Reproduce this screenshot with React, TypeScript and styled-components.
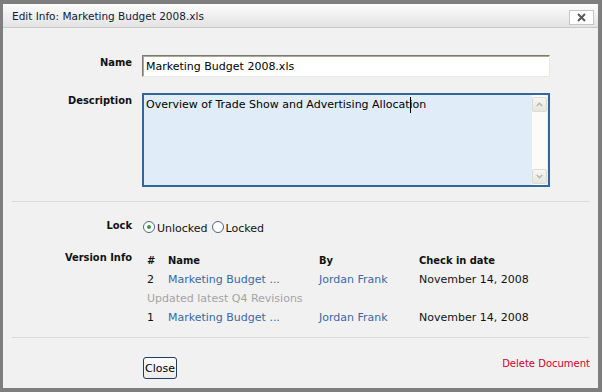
import React from 'react';
import styled, { createGlobalStyle } from 'styled-components';

const Global = createGlobalStyle`
  html, body { margin: 0; padding: 0; background: #ffffff; }
  body {
    font-family: "DejaVu Sans", Verdana, sans-serif;
    font-size: 11px;
    color: #111;
  }
`;

const Dialog = styled.div`
  box-sizing: border-box;
  width: 602px;
  height: 392px;
  border-style: solid;
  border-color: #7e7e7e;
  border-width: 4px 4px 4px 3px;
  background: #f1f1f1;
  display: flex;
  flex-direction: column;
`;

const TitleBar = styled.div`
  height: 23px;
  display: flex;
  align-items: center;
  justify-content: space-between;
  padding: 0 4px 0 9px;
  background: linear-gradient(#fcfcfc, #e3e3e3);
  border-bottom: 1px solid #c9c9c9;
`;

const Title = styled.div`
  font-size: 10.5px;
  color: #14183a;
  padding-top: 1px;
`;

const XButton = styled.button`
  box-sizing: border-box;
  width: 25px;
  height: 15px;
  margin-top: 4px;
  padding: 0;
  border: 1px solid #c6c6c6;
  background: #ffffff;
  display: flex;
  align-items: center;
  justify-content: center;
`;

const Body = styled.div`
  flex: 1;
  padding: 27px 8px 9px 9px;
  display: flex;
  flex-direction: column;
`;

const FormGrid = styled.div<{ $gap: number; $top?: number }>`
  display: grid;
  grid-template-columns: 120px 408px;
  column-gap: 10px;
  row-gap: ${p => p.$gap}px;
  margin-top: ${p => p.$top ?? 0}px;
`;

const Label = styled.div`
  text-align: right;
  font-family: "DejaVu Sans Condensed", "DejaVu Sans", sans-serif;
  font-stretch: condensed;
  font-weight: bold;
  font-size: 11px;
  line-height: 16px;
  color: #111;
`;

const TextInput = styled.div`
  box-sizing: border-box;
  height: 22px;
  border-style: solid;
  border-width: 1px;
  border-color: #7f7b6e #ece9d8 #ece9d8 #7f7b6e;
  box-shadow: inset 1px 1px 0 #aaa796;
  background: #ffffff;
  padding: 0 3px;
  line-height: 21px;
  font-size: 11px;
  color: #000;
`;

const DescBox = styled.div`
  box-sizing: border-box;
  height: 94px;
  border: 2px solid #336699;
  background: #e1ecf9;
  display: flex;
`;

const DescText = styled.div`
  flex: 1;
  padding: 2px 2px;
  line-height: 16px;
  font-size: 11px;
  color: #000;
`;

const Caret = styled.span`
  display: inline-block;
  width: 1px;
  height: 16px;
  margin-right: -1px;
  background: #000;
  vertical-align: top;
`;

const ScrollTrack = styled.div`
  width: 15px;
  margin-right: 1px;
  padding: 2px 0 1px;
  background: #fbfbf7;
  display: flex;
  flex-direction: column;
  justify-content: space-between;
`;

const ScrollBtn = styled.div`
  box-sizing: border-box;
  width: 15px;
  height: 15px;
  border: 1px solid #dcdcd2;
  border-radius: 2px;
  background: linear-gradient(#f6f6f2, #e6e6e0);
  display: flex;
  align-items: center;
  justify-content: center;
`;

const Divider = styled.div<{ $top: number }>`
  height: 1px;
  background: #dadada;
  margin-top: ${p => p.$top}px;
`;

const RadioGroup = styled.div`
  margin-top: 3px;
  display: flex;
  gap: 3px;
  line-height: 16px;
`;

const RadioOption = styled.label`
  display: flex;
  align-items: flex-start;
  gap: 2px;
  margin-left: 1px;
  color: #111;
`;

const RadioCircle = styled.span<{ $on?: boolean }>`
  box-sizing: border-box;
  width: 12px;
  height: 12px;
  border-radius: 50%;
  border: 1px solid #4f6478;
  background: #ffffff;
  display: flex;
  align-items: center;
  justify-content: center;
  &::after {
    content: '';
    width: 4px;
    height: 4px;
    border-radius: 50%;
    background: ${p => (p.$on ? '#2f9e3a' : 'transparent')};
  }
`;

const VersionTable = styled.div`
  margin-top: 1px;
  padding-left: 5px;
  display: grid;
  grid-template-columns: 21px 151px 100px auto;
  line-height: 19px;
  font-size: 11px;
`;

const HeadCell = styled.div`
  font-family: "DejaVu Sans Condensed", "DejaVu Sans", sans-serif;
  font-stretch: condensed;
  font-weight: bold;
  color: #111;
`;

const Cell = styled.div<{ $link?: boolean }>`
  color: ${p => (p.$link ? '#3a67a8' : '#111')};
  white-space: nowrap;
`;

const NoteCell = styled.div`
  grid-column: 1 / -1;
  color: #a4a4a4;
`;

const Footer = styled.div`
  margin-top: 17px;
  display: flex;
  justify-content: space-between;
  align-items: flex-start;
`;

const ButtonCell = styled.div`
  padding-left: 131px;
  padding-top: 2px;
`;

const CloseButton = styled.button`
  box-sizing: border-box;
  height: 22px;
  width: 34px;
  padding: 0;
  border: 1px solid #1c3f63;
  border-radius: 3px;
  background: linear-gradient(#ffffff, #ececec);
  font-family: "DejaVu Sans", sans-serif;
  font-size: 11px;
  color: #000;
`;

const DeleteLink = styled.a`
  font-size: 10px;
  line-height: 16px;
  color: #d4002a;
  text-decoration: none;
  padding-top: 1px;
`;

const Chevron = ({ up }: { up?: boolean }) => (
  <svg width="7" height="5" viewBox="0 0 7 5">
    <path
      d={up ? 'M0.8 4 L3.5 1.2 L6.2 4' : 'M0.8 1 L3.5 3.8 L6.2 1'}
      fill="none"
      stroke="#b4b4b0"
      strokeWidth="1.4"
    />
  </svg>
);

const versions = [
  { n: '2', name: 'Marketing Budget ...', by: 'Jordan Frank', date: 'November 14, 2008', note: 'Updated latest Q4 Revisions' },
  { n: '1', name: 'Marketing Budget ...', by: 'Jordan Frank', date: 'November 14, 2008' },
];

export default function App() {
  return (
    <>
      <Global />
      <Dialog>
        <TitleBar>
          <Title>Edit Info: Marketing Budget 2008.xls</Title>
          <XButton aria-label="close">
            <svg width="9" height="9" viewBox="0 0 9 9">
              <path d="M1 1 L8 8 M8 1 L1 8" stroke="#5a5a5a" strokeWidth="2" />
            </svg>
          </XButton>
        </TitleBar>
        <Body>
          <FormGrid $gap={16}>
            <Label>Name</Label>
            <TextInput>Marketing Budget 2008.xls</TextInput>
            <Label>Description</Label>
            <DescBox>
              <DescText>
                Overview of Trade Show and Advertising Allocat<Caret />ion
              </DescText>
              <ScrollTrack>
                <ScrollBtn><Chevron up /></ScrollBtn>
                <ScrollBtn><Chevron /></ScrollBtn>
              </ScrollTrack>
            </DescBox>
          </FormGrid>
          <Divider $top={14} />
          <FormGrid $gap={13} $top={16}>
            <Label>Lock</Label>
            <RadioGroup>
              <RadioOption><RadioCircle $on />Unlocked</RadioOption>
              <RadioOption><RadioCircle />Locked</RadioOption>
            </RadioGroup>
            <Label>Version Info</Label>
            <VersionTable>
              <HeadCell>#</HeadCell>
              <HeadCell>Name</HeadCell>
              <HeadCell>By</HeadCell>
              <HeadCell>Check in date</HeadCell>
              {versions.map(v => (
                <React.Fragment key={v.n}>
                  <Cell>{v.n}</Cell>
                  <Cell $link>{v.name}</Cell>
                  <Cell $link>{v.by}</Cell>
                  <Cell>{v.date}</Cell>
                  {v.note && <NoteCell>{v.note}</NoteCell>}
                </React.Fragment>
              ))}
            </VersionTable>
          </FormGrid>
          <Divider $top={10} />
          <Footer>
            <ButtonCell>
              <CloseButton>Close</CloseButton>
            </ButtonCell>
            <DeleteLink>Delete Document</DeleteLink>
          </Footer>
        </Body>
      </Dialog>
    </>
  );
}
